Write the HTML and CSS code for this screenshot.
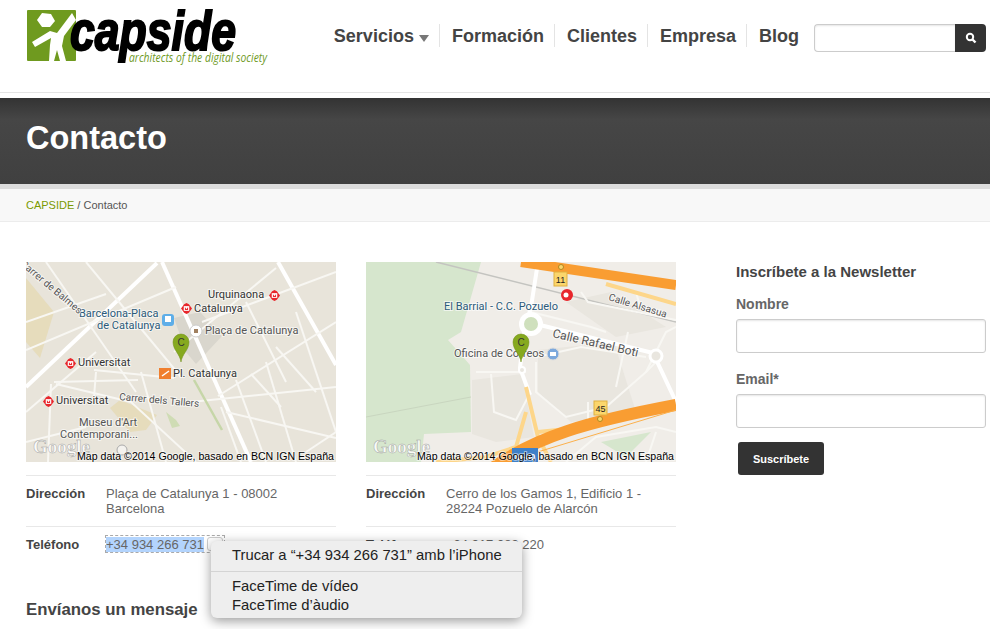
FILE: index.html
```html
<!DOCTYPE html>
<html lang="es">
<head>
    <meta charset="UTF-8">
    <title>Contacto - CAPSIDE</title>
    <link rel="stylesheet" href="styles.css">
</head>
<body>
    <header class="top">
        <a class="logo" href="#">
            <svg width="245" height="62" viewBox="26 5 245 62">
                <rect x="27" y="10" width="49" height="51" rx="1" fill="#6f9a1f"/>
                <polygon points="37,20 42,13 51,14 55,21 50,27 42,27" fill="#fff"/>
                <polygon points="72,13 76,20 64,36 62,46 66,61 60,61 57,50 54,61 49,61 50,45 51,38 35,47 32,42 50,31 57,33" fill="#fff"/>
                <text class="logo-name" x="70" y="50" textLength="166" lengthAdjust="spacingAndGlyphs">capside</text>
                <text class="logo-tag" x="129" y="62" textLength="138" lengthAdjust="spacingAndGlyphs">architects of the digital society</text>
            </svg>
        </a>
        <nav class="menu">
            <a href="#">Servicios <span class="caret"></span></a>
            <a href="#">Formación</a>
            <a href="#">Clientes</a>
            <a href="#">Empresa</a>
            <a href="#">Blog</a>
        </nav>
        <form class="search">
            <input type="text">
            <button type="button">
                <svg width="12" height="12" viewBox="0 0 12 12"><circle cx="5" cy="5" r="3.2" fill="none" stroke="#fff" stroke-width="2"/><line x1="7.5" y1="7.5" x2="10.5" y2="10.5" stroke="#fff" stroke-width="2.4"/></svg>
            </button>
        </form>
    </header>

    <div class="banner">
        <h1>Contacto</h1>
    </div>
    <div class="crumbs"><a href="#">CAPSIDE</a> / Contacto</div>

    <div class="container">
        <div class="offices">
            <div class="office-row">
                <div class="office">
                    <svg class="map" width="310" height="200" viewBox="0 0 310 200">
                        <defs>
                            <symbol id="metro" viewBox="0 0 14 14" overflow="visible">
                                <polygon points="7,0 10,1.5 14,7 10,12.5 7,14 4,12.5 0,7 4,1.5" fill="#e8262c"/>
                                <rect x="3.5" y="4" width="7" height="6" fill="#fff"/>
                                <polygon points="5,5 7,8 9,5 9,9 5,9" fill="#e8262c"/>
                            </symbol>
                        </defs>
                        <rect width="310" height="200" fill="#e8e4da"/>
                        <polygon points="0,16 28,50 14,96 0,80" fill="#e6dcbc"/>
                        <polygon points="148,56 174,50 196,74 170,102 160,90" fill="#d9d6cd"/>
                        <polygon points="84,146 94,138 131,153 120,168 104,170" fill="#e6dcbc"/>
                        <polygon points="140,150 150,158 154,164 146,166" fill="#cfdcb4"/>
                        <g class="road wide">
                            <line x1="0" y1="125" x2="131" y2="1"/>
                            <line x1="252" y1="0" x2="310" y2="103"/>
                            <line x1="136" y1="0" x2="225" y2="200"/>
                        </g>
                        <g class="road">
                            <line x1="0" y1="60" x2="80" y2="32"/>
                            <line x1="0" y1="88" x2="150" y2="25"/>
                            <line x1="20" y1="0" x2="110" y2="130"/>
                            <line x1="60" y1="0" x2="155" y2="115"/>
                            <line x1="0" y1="150" x2="70" y2="90"/>
                            <line x1="28" y1="120" x2="112" y2="118"/>
                            <line x1="68" y1="108" x2="148" y2="116"/>
                            <line x1="115" y1="110" x2="140" y2="200"/>
                            <line x1="25" y1="122" x2="22" y2="200"/>
                            <line x1="70" y1="110" x2="68" y2="135"/>
                            <line x1="30" y1="122" x2="105" y2="140"/>
                            <line x1="105" y1="140" x2="170" y2="200"/>
                            <line x1="148" y1="90" x2="250" y2="6"/>
                            <line x1="176" y1="60" x2="310" y2="10"/>
                            <line x1="192" y1="134" x2="310" y2="60"/>
                            <line x1="165" y1="140" x2="310" y2="125"/>
                            <line x1="210" y1="118" x2="240" y2="200"/>
                            <line x1="240" y1="100" x2="270" y2="200"/>
                            <line x1="270" y1="50" x2="310" y2="170"/>
                            <line x1="220" y1="40" x2="260" y2="120"/>
                            <line x1="200" y1="150" x2="310" y2="176"/>
                            <line x1="280" y1="190" x2="310" y2="170"/>
                            <line x1="195" y1="145" x2="215" y2="200"/>
                            <line x1="225" y1="112" x2="255" y2="145"/>
                            <line x1="250" y1="85" x2="290" y2="130"/>
                            <line x1="0" y1="180" x2="60" y2="165"/>
                        </g>
                        <line x1="168" y1="118" x2="196" y2="168" stroke="#c6d6a8" stroke-width="2.5"/>
                        <use href="#metro" x="243" y="28" width="11" height="11"/>
                        <use href="#metro" x="155" y="41" width="11" height="11"/>
                        <use href="#metro" x="39" y="96" width="11" height="11"/>
                        <use href="#metro" x="17" y="134" width="11" height="11"/>
                        <rect x="136" y="52" width="12" height="12" rx="3" fill="#5eaee8"/>
                        <rect x="139" y="54" width="6" height="6" fill="#fff"/>
                        <circle cx="170" cy="69" r="6" fill="#fff" stroke="#ccc"/>
                        <rect x="168" y="67" width="4" height="4" fill="#a08060"/>
                        <rect x="133" y="106" width="12" height="11" fill="#f07f2e"/>
                        <line x1="136" y1="114" x2="143" y2="109" stroke="#fff" stroke-width="1.5"/>
                        <circle cx="96" cy="188" r="5" fill="#f4f2ee" stroke="#aaa"/>
                        <text class="lb" x="182" y="36">Urquinaona</text>
                        <text class="lb" x="168" y="50">Catalunya</text>
                        <text class="lb blue" x="53" y="55">Barcelona-Placa</text>
                        <text class="lb blue" x="71" y="67">de Catalunya</text>
                        <text class="lb soft" x="179" y="72">Plaça de Catalunya</text>
                        <text class="lb" x="52" y="104">Universitat</text>
                        <text class="lb" x="147" y="115">Pl. Catalunya</text>
                        <text class="lb" x="30" y="142">Universitat</text>
                        <text class="lb soft small" transform="translate(93 138) rotate(5)">Carrer dels Tallers</text>
                        <text class="lb soft small" transform="translate(-6 3) rotate(40)">Carrer de Balmes</text>
                        <text class="lb soft" x="53" y="164">Museu d'Art</text>
                        <text class="lb soft" x="34" y="176">Contemporani...</text>
                        <text class="google" x="7" y="191">Google</text>
                        <path class="pin" d="M155 100 C154 92 147 88 147 80 A8 8 0 0 1 163 80 C163 88 156 92 155 100 Z"/>
                        <text class="pin-c" x="155" y="84">C</text>
                        <text class="credit" x="51" y="198">Map data ©2014 Google, basado en BCN IGN España</text>
                    </svg>
                    <dl class="info">
                        <div class="info-row">
                            <dt>Dirección</dt>
                            <dd>Plaça de Catalunya 1 - 08002 Barcelona</dd>
                        </div>
                        <div class="info-row">
                            <dt>Teléfono</dt>
                            <dd class="phone">
                                <span class="detected"><span class="selected">+34 934 266 731</span><span class="more"></span></span>
                                <div class="popup">
                                    <div class="popup-item">Trucar a “+34 934 266 731” amb l’iPhone</div>
                                    <div class="popup-sep"></div>
                                    <div class="popup-item">FaceTime de vídeo</div>
                                    <div class="popup-item">FaceTime d’àudio</div>
                                </div>
                            </dd>
                        </div>
                    </dl>
                </div>

                <div class="office">
                    <svg class="map" width="310" height="200" viewBox="0 0 310 200">
                        <rect width="310" height="200" fill="#f0ede8"/>
                        <polygon points="0,0 115,0 105,35 95,70 82,78 104,103 105,170 58,172 55,200 0,200" fill="#d6e6cd"/>
                        <polygon points="106,118 156,112 168,175 130,180 106,172" fill="#e9e6df"/>
                        <polygon points="172,88 248,80 270,150 205,160 172,130" fill="#e9e6df"/>
                        <polygon points="245,30 300,65 250,75 200,40" fill="#e9e6df"/>
                        <polygon points="235,180 285,170 260,195" fill="#d6e6cd"/>
                        <line x1="70" y1="0" x2="310" y2="60" stroke="#c4c4c0" stroke-width="1.5"/>
                        <line x1="0" y1="155" x2="105" y2="135" stroke="#c9d6bf" stroke-width="1"/>
                        <g class="road">
                            <path d="M110 110 H160 M125 112 L128 150 L150 158 L162 135" fill="none"/>
                            <path d="M170 95 L215 85 L280 95 M165 50 L225 65 L240 70" fill="none"/>
                            <path d="M170 100 L170 130 L200 155 L240 145 L280 110 L290 100" fill="none"/>
                            <path d="M250 125 L262 70 M280 110 L300 70 L310 65" fill="none"/>
                            <path d="M215 30 L222 40 L310 58 M270 30 L275 48" fill="none"/>
                            <path d="M200 200 L230 175 L290 165 L310 170 M290 170 L280 200" fill="none"/>
                            <path d="M222 140 L222 158 L240 156" fill="none"/>
                        </g>
                        <g class="road wide">
                            <path d="M172 0 L165 45 L158 70 L154 106 L164 133" fill="none"/>
                            <path d="M174 63 L287 91 L310 140" fill="none"/>
                        </g>
                        <circle cx="165" cy="62" r="12" fill="#fff"/>
                        <circle cx="165" cy="62" r="7" fill="#cfe0bd"/>
                        <circle cx="290" cy="94" r="6" fill="#e9e6df" stroke="#fff" stroke-width="3"/>
                        <circle cx="156" cy="108" r="3" fill="#e9e6df" stroke="#fff" stroke-width="2"/>
                        <g class="motorway-light">
                            <path d="M160 125 L172 175 L185 200 M160 150 L150 185 L120 195 L70 200 M172 170 L220 165" fill="none"/>
                            <path d="M240 22 L310 42" fill="none"/>
                        </g>
                        <path class="motorway" d="M155 0 L310 23" stroke-width="10" fill="none"/>
                        <path class="motorway" d="M128 205 C170 175 220 160 310 143" stroke-width="12" fill="none"/>
                        <line x1="165" y1="192" x2="310" y2="148" stroke="#fbb04c" stroke-width="1"/>
                        <rect x="188" y="10" width="13" height="14" fill="#fbd66c" stroke="#e0b040"/>
                        <text class="road-num" x="194.5" y="21">11</text>
                        <circle cx="195" cy="5" r="2.5" fill="#fbd66c" stroke="#b08820"/>
                        <rect x="228" y="139" width="13" height="14" fill="#fbd66c" stroke="#e0b040"/>
                        <text class="road-num" x="234.5" y="150">45</text>
                        <circle cx="234" cy="157" r="2.5" fill="#fbd66c" stroke="#b08820"/>
                        <rect x="146" y="186" width="26" height="14" fill="#3f80c8"/>
                        <text class="shield" x="159" y="198">M-40</text>
                        <circle cx="201" cy="33" r="6" fill="#e8262c"/>
                        <circle cx="200" cy="33" r="2.5" fill="#fff"/>
                        <circle cx="187" cy="92" r="6" fill="#7ca8dc" stroke="#ddd"/>
                        <rect x="184" y="90" width="6" height="4" fill="#fff"/>
                        <text class="lb blue" x="78" y="48">El Barrial - C.C. Pozuelo</text>
                        <text class="lb soft small" transform="translate(242 38) rotate(17)">Calle Alsasua</text>
                        <text class="lb soft big" transform="translate(186 75) rotate(13)">Calle Rafael Boti</text>
                        <text class="lb soft" x="88" y="95">Oficina de Correos</text>
                        <text class="google" x="7" y="191">Google</text>
                        <path class="pin" d="M155 100 C154 92 147 88 147 80 A8 8 0 0 1 163 80 C163 88 156 92 155 100 Z"/>
                        <text class="pin-c" x="155" y="84">C</text>
                        <text class="credit" x="51" y="198">Map data ©2014 Google, basado en BCN IGN España</text>
                    </svg>
                    <dl class="info">
                        <div class="info-row">
                            <dt>Dirección</dt>
                            <dd>Cerro de los Gamos 1, Edificio 1 - 28224 Pozuelo de Alarcón</dd>
                        </div>
                        <div class="info-row">
                            <dt>Teléfono</dt>
                            <dd>+34 917 089 220</dd>
                        </div>
                    </dl>
                </div>
            </div>
            <h2>Envíanos un mensaje</h2>
        </div>

        <aside class="sidebar">
            <h3>Inscríbete a la Newsletter</h3>
            <label for="nombre">Nombre</label>
            <input id="nombre" type="text">
            <label for="email">Email*</label>
            <input class="last" id="email" type="text">
            <button class="send" type="button">Suscríbete</button>
        </aside>
    </div>
</body>
</html>
```

FILE: styles.css
```css
/* General Styling */
html {
    height: 629px;
    overflow: hidden;
}

body {
    font-family: 'Liberation Sans', Arial, sans-serif;
    font-size: 13px;
    margin: 0;
    min-height: 629px;
    background-color: #fff;
    color: #666;
}

a {
    text-decoration: none;
}

/* Top bar */
.top {
    display: flex;
    align-items: flex-start;
    height: 92px;
    padding: 0 4px 0 26px;
    border-bottom: 1px solid #e4e4e4;
}

.logo {
    display: block;
    margin-top: 5px;
}

.logo-name {
    font-family: 'Liberation Sans', sans-serif;
    font-size: 55px;
    font-weight: bold;
    font-style: italic;
    fill: #000;
    stroke: #000;
    stroke-width: 2px;
}

.logo-tag {
    font-family: 'Open Sans', sans-serif;
    font-size: 12px;
    font-style: italic;
    fill: #6f9a1f;
}

.menu {
    display: flex;
    margin: 24px 0 0 auto;
}

.menu a {
    display: block;
    height: 23px;
    padding: 0 10px 0 12px;
    border-left: 1px solid #e4e4e4;
    color: #444;
    font-size: 18px;
    font-weight: bold;
    line-height: 25px;
}

.menu a:first-child {
    border-left: none;
}

.caret {
    display: inline-block;
    border-top: 7px solid #777;
    border-left: 5px solid transparent;
    border-right: 5px solid transparent;
    vertical-align: 0;
}

.search {
    display: flex;
    margin: 24px 0 0 5px;
}

.search input {
    box-sizing: border-box;
    width: 141px;
    height: 28px;
    border: 1px solid #ccc;
    border-right: none;
    border-radius: 4px 0 0 4px;
    box-shadow: inset 0 1px 2px rgba(0, 0, 0, 0.1);
}

.search button {
    display: flex;
    align-items: center;
    justify-content: center;
    width: 31px;
    height: 28px;
    padding: 0;
    border: none;
    border-radius: 0 4px 4px 0;
    background-color: #333;
}

/* Title */
.banner {
    height: 86px;
    margin-top: 5px;
    border-bottom: 5px solid #dcdcdc;
    background: linear-gradient(#333 0, #464646 25%, #404040 100%);
}

.banner h1 {
    margin: 0;
    padding-left: 26px;
    color: #fff;
    font-size: 32.5px;
    line-height: 80px;
}

.crumbs {
    height: 32px;
    padding-left: 26px;
    border-bottom: 1px solid #ececec;
    background-color: #f8f8f8;
    color: #555;
    font-size: 11px;
    line-height: 32px;
}

.crumbs a {
    color: #7a9a01;
}

/* Content */
.container {
    display: flex;
    padding: 40px 4px 0 26px;
}

.offices {
    width: 650px;
}

.office-row {
    display: flex;
    gap: 30px;
}

.office {
    width: 310px;
}

.map {
    display: block;
}

.road line,
.road path {
    stroke: #f8f7f3;
    stroke-width: 2;
}

.road.wide line,
.road.wide path {
    stroke: #fff;
    stroke-width: 4;
}

.motorway {
    stroke: #f99d32;
}

.motorway-light path {
    stroke: #fdd68a;
    stroke-width: 4;
}

.lb {
    font-family: 'Roboto', sans-serif;
    font-size: 11px;
    fill: #333;
    stroke: #fff;
    stroke-width: 2px;
    stroke-opacity: 0.6;
    paint-order: stroke;
}

.lb.blue {
    fill: #2b5a7a;
}

.lb.soft {
    fill: #555;
}

.lb.small {
    font-size: 10px;
}

.lb.big {
    font-size: 12px;
}

.google {
    font-family: 'Liberation Serif', serif;
    font-size: 19px;
    font-weight: bold;
    fill: #fff;
    stroke: #999;
    stroke-width: 0.5px;
    opacity: 0.85;
}

.credit {
    font-family: 'Liberation Sans', sans-serif;
    font-size: 10.6px;
    fill: #000;
    stroke: #fff;
    stroke-width: 2px;
    stroke-opacity: 0.5;
    paint-order: stroke;
}

.pin {
    fill: #86a91f;
    stroke: #6d8c16;
    stroke-width: 0.5px;
}

.pin-c {
    font-family: 'Liberation Sans', sans-serif;
    font-size: 10px;
    text-anchor: middle;
    fill: #333;
}

.road-num {
    font-family: 'Liberation Sans', sans-serif;
    font-size: 9px;
    text-anchor: middle;
    fill: #222;
}

.shield {
    font-family: 'Liberation Sans', sans-serif;
    font-size: 9px;
    font-weight: bold;
    text-anchor: middle;
    fill: #fff;
}

.info {
    margin: 13px 0 0;
}

.info-row {
    display: flex;
    padding: 10px 0;
    border-top: 1px solid #e8e8e8;
    line-height: 15px;
}

.info-row dt {
    width: 80px;
    color: #444;
    font-weight: bold;
}

.info-row dd {
    width: 200px;
    margin: 0;
}

.phone {
    position: relative;
}

.detected {
    display: inline-flex;
    align-items: center;
    height: 16px;
    margin: -2px 0 0 -1px;
    padding-right: 1px;
    border: 1px dashed #aaa;
    vertical-align: top;
}

.selected {
    background-color: #b3d4fd;
}

.more {
    width: 14px;
    height: 12px;
    margin-left: 3px;
    border: 1px solid #ccc;
    border-radius: 3px;
}

.popup {
    position: absolute;
    top: 4px;
    left: 105px;
    z-index: 2;
    box-sizing: border-box;
    width: 311px;
    height: 77px;
    padding: 5px 0 0;
    border-radius: 6px;
    background-color: #eee;
    box-shadow: 0 3px 12px rgba(0, 0, 0, 0.4);
    color: #222;
    font-size: 14.8px;
}

.popup-item {
    padding-left: 21px;
    line-height: 19px;
}

.popup-sep {
    height: 1px;
    margin: 6px 0 5px;
    background-color: #d4d4d4;
}

h2 {
    margin: 37px 0 0;
    color: #444;
    font-size: 16.8px;
    line-height: 20px;
}

/* Newsletter */
.sidebar {
    width: 250px;
    margin-left: 60px;
}

.sidebar h3 {
    margin: 0 0 13px;
    color: #444;
    font-size: 15px;
    line-height: 20px;
}

.sidebar label {
    display: block;
    color: #666;
    font-size: 14px;
    font-weight: bold;
    line-height: 18px;
}

.sidebar input {
    display: block;
    box-sizing: border-box;
    width: 250px;
    height: 34px;
    margin: 6px 0 17px;
    border: 1px solid #ccc;
    border-radius: 3px;
    box-shadow: inset 0 1px 2px rgba(0, 0, 0, 0.1);
}

.sidebar input.last {
    margin-bottom: 14px;
}

.send {
    display: block;
    width: 86px;
    height: 33px;
    margin: 0 0 0 2px;
    border: none;
    border-radius: 3px;
    background-color: #333;
    color: #fff;
    font-family: inherit;
    font-size: 11px;
    font-weight: bold;
}
```
